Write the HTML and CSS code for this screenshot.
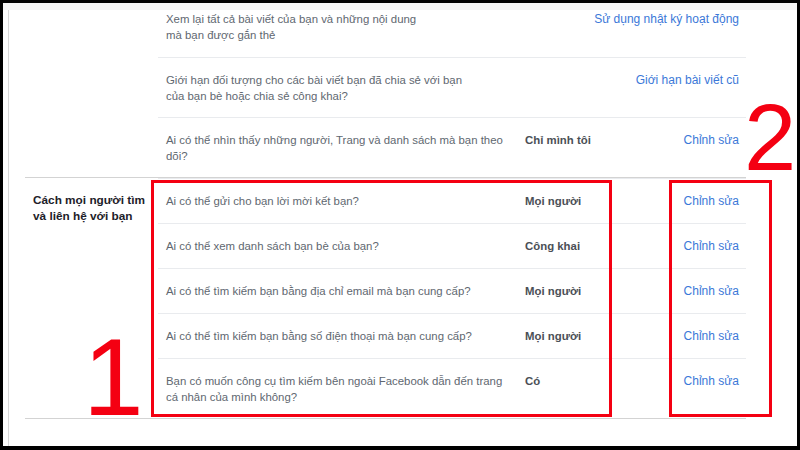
FILE: index.html
```html
<!DOCTYPE html>
<html lang="vi">
<head>
<meta charset="UTF-8">
<meta name="viewport" content="width=device-width, initial-scale=1.0">
<title>Cài đặt quyền riêng tư</title>
<link rel="stylesheet" href="styles.css">
</head>
<body>
<div class="screen">
  <div class="topbar"></div>
  <div class="page">

    <div class="section">
      <div class="section-title"></div>
      <div class="rows">
        <div class="row row-first">
          <div class="q">Xem lại tất cả bài viết của bạn và những nội dung<br>mà bạn được gắn thẻ</div>
          <a class="link" href="#">Sử dụng nhật ký hoạt động</a>
        </div>
        <div class="row row-2l">
          <div class="q">Giới hạn đối tượng cho các bài viết bạn đã chia sẻ với bạn<br>của bạn bè hoặc chia sẻ công khai?</div>
          <a class="link" href="#">Giới hạn bài viết cũ</a>
        </div>
        <div class="row row-2l">
          <div class="q">Ai có thể nhìn thấy những người, Trang và danh sách mà bạn theo<br>dõi?</div>
          <div class="val">Chỉ mình tôi</div>
          <a class="link" href="#">Chỉnh sửa</a>
        </div>
      </div>
    </div>

    <div class="section section-last">
      <div class="section-title">Cách mọi người tìm<br>và liên hệ với bạn</div>
      <div class="rows">
        <div class="row">
          <div class="q">Ai có thể gửi cho bạn lời mời kết bạn?</div>
          <div class="val">Mọi người</div>
          <a class="link" href="#">Chỉnh sửa</a>
        </div>
        <div class="row">
          <div class="q">Ai có thể xem danh sách bạn bè của bạn?</div>
          <div class="val">Công khai</div>
          <a class="link" href="#">Chỉnh sửa</a>
        </div>
        <div class="row">
          <div class="q">Ai có thể tìm kiếm bạn bằng địa chỉ email mà bạn cung cấp?</div>
          <div class="val">Mọi người</div>
          <a class="link" href="#">Chỉnh sửa</a>
        </div>
        <div class="row">
          <div class="q">Ai có thể tìm kiếm bạn bằng số điện thoại mà bạn cung cấp?</div>
          <div class="val">Mọi người</div>
          <a class="link" href="#">Chỉnh sửa</a>
        </div>
        <div class="row row-2l">
          <div class="q">Bạn có muốn công cụ tìm kiếm bên ngoài Facebook dẫn đến trang<br>cá nhân của mình không?</div>
          <div class="val">Có</div>
          <a class="link" href="#">Chỉnh sửa</a>
        </div>
      </div>
    </div>

  </div>

  <!-- red annotations drawn over the screenshot -->
  <div class="mark mark-1"></div>
  <div class="mark mark-2"></div>
  <div class="num num-1">1</div>
  <div class="num num-2">2</div>
</div>
</body>
</html>
```

FILE: styles.css
```css
* {
margin: 0;
padding: 0;
box-sizing: border-box;
}
body {
background: #000;
padding: 3px 3px 4px 3px;
font-family: "Liberation Sans", Arial, sans-serif;
font-size: 12px;
line-height: 16px;
}
.screen {
position: relative;
width: 794px;
height: 443px;
background: #fff;
overflow: hidden;
}
.topbar {
height: 7px;
background: #f4f4f4;
}
.page {
margin-left: 5px;
border-left: 1px solid #d8d8d8;
height: 436px;
padding-left: 16px;
}
.section {
width: 721px;
display: flex;
border-top: 1px solid #d3d3d3;
}
.section:first-child {
border-top: none;
}
.section-last {
border-bottom: 1px solid #d3d3d3;
}
.section-title {
width: 133px;
padding: 14px 8px;
font-weight: bold;
font-size: 11.8px;
color: #1d2129;
}
.rows {
flex: 1;
}
.row {
display: flex;
padding: 14px 7px 14px 8px;
border-top: 1px solid #e9ebee;
}
.row-2l {
padding-bottom: 13px;
}
.row-first {
border-top: none;
padding-top: 1px;
}
.q {
width: 359px;
font-size: 11.4px;
color: #606770;
}
.val {
font-weight: bold;
font-size: 11.4px;
color: #4b4f56;
}
.link {
margin-left: auto;
color: #3b78d8;
text-decoration: none;
}
.mark {
position: absolute;
top: 177px;
height: 237px;
border: 3px solid #f40012;
}
.mark-1 {
left: 148px;
width: 461px;
}
.mark-2 {
left: 666px;
width: 103px;
}
.num {
position: absolute;
color: #f40012;
line-height: 1;
}
.num-1 {
left: 80px;
top: 320px;
font-size: 109px;
}
.num-2 {
left: 741px;
top: 88px;
font-size: 94px;
}
```
